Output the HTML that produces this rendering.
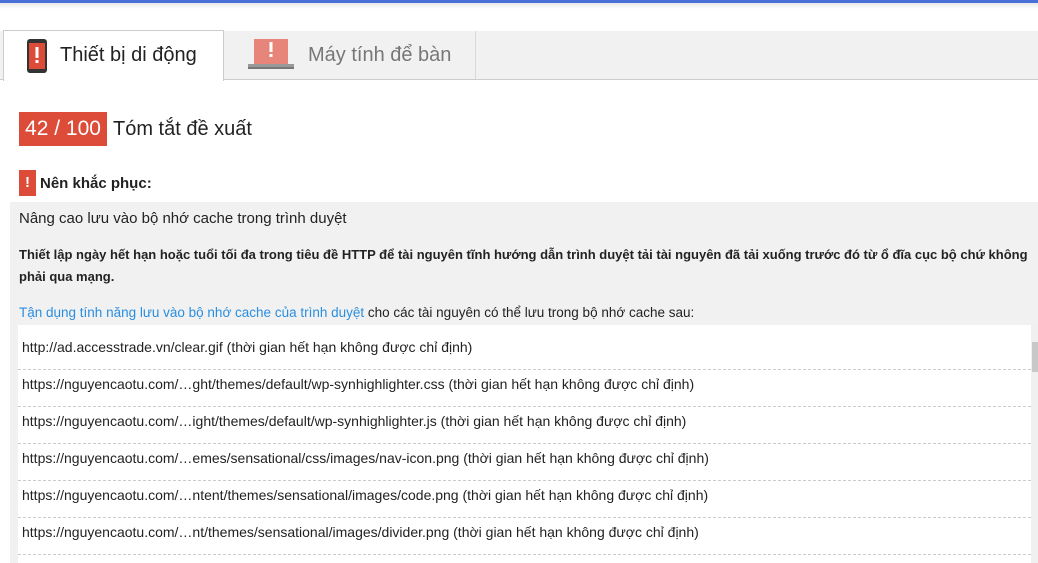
<!DOCTYPE html>
<html><head><meta charset="utf-8"><style>
*{margin:0;padding:0;box-sizing:border-box}
html,body{width:1038px;height:563px;overflow:hidden}
body{background:#fff;font-family:"Liberation Sans",Arial,sans-serif;position:relative;color:#222}
.top{position:absolute;left:0;top:0;width:1038px;height:3px;background:#4a6fd8}
.topsh{position:absolute;left:0;top:3px;width:1038px;height:6px;background:linear-gradient(#e8e8e8,#fff)}
.bar{position:absolute;left:0;top:31px;width:1038px;height:49px;background:#f1f1f1;border-bottom:1px solid #ccc}
.tab1{position:absolute;left:3px;top:30px;width:221px;height:51px;background:#fff;border:1px solid #ccc;border-bottom:none}
.tab2{position:absolute;left:475px;top:31px;width:1px;height:48px;background:#d8d8d8}
.t{position:absolute;font-size:20px}
.score{position:absolute;left:19px;top:112px;width:88px;height:34px;background:#dd4b39;color:#fff;font-size:21px;line-height:34px;text-align:center}
.panel{position:absolute;left:10px;top:202px;width:1028px;height:361px;background:#f1f1f1}
.list{position:absolute;left:18px;top:325px;width:1013px;height:238px;background:#fff}
.row{position:absolute;left:22px;font-size:14px;color:#222;white-space:nowrap}
.sep{position:absolute;left:18px;width:1013px;border-top:1px dashed #ccc}
.sb{position:absolute;left:1031px;top:325px;width:7px;height:238px;background:#f0f0f0}
</style></head><body>
<div class="top"></div><div class="topsh"></div>
<div class="bar"></div><div class="tab1"></div><div class="tab2"></div>
<svg style="position:absolute;left:27px;top:39px" width="20" height="34"><rect x="0" y="0" width="20" height="34" rx="3" fill="#333"/><rect x="2" y="4" width="16" height="26" fill="#dd4b39"/><rect x="8.5" y="8" width="3" height="11" fill="#fff"/><rect x="8.5" y="21" width="3" height="3" fill="#fff"/></svg>
<div class="t" style="left:60px;top:44px;color:#222">Thiết bị di động</div>
<svg style="position:absolute;left:248px;top:39px" width="46" height="31"><rect x="6" y="0" width="34" height="25" fill="#e8857a"/><rect x="21.5" y="3" width="3" height="10" fill="#fff"/><rect x="21.5" y="15" width="3" height="3" fill="#fff"/><rect x="0" y="25" width="46" height="3" fill="#999"/><rect x="0" y="28" width="46" height="2" fill="#777"/></svg>
<div class="t" style="left:308px;top:44px;color:#777">Máy tính để bàn</div>
<div class="score">42 / 100</div>
<div class="t" style="left:113px;top:118px">Tóm tắt đề xuất</div>
<div style="position:absolute;left:19px;top:170px;width:17px;height:26px;background:#dd4b39;color:#fff;font-weight:bold;font-size:15px;text-align:center;line-height:26px">!</div>
<div style="position:absolute;left:40px;top:175px;font-weight:bold;font-size:15px">Nên khắc phục:</div>
<div class="panel"></div>
<div style="position:absolute;left:19px;top:210px;font-size:15px;color:#222">Nâng cao lưu vào bộ nhớ cache trong trình duyệt</div>
<div style="position:absolute;left:19px;top:244px;width:1015px;font-size:13px;font-weight:bold;line-height:22px">Thiết lập ngày hết hạn hoặc tuổi tối đa trong tiêu đề HTTP để tài nguyên tĩnh hướng dẫn trình duyệt tải tài nguyên đã tải xuống trước đó từ ổ đĩa cục bộ chứ không phải qua mạng.</div>
<div style="position:absolute;left:19px;top:305px;font-size:13.5px"><span style="color:#2a8ee0">Tận dụng tính năng lưu vào bộ nhớ cache của trình duyệt</span> cho các tài nguyên có thể lưu trong bộ nhớ cache sau:</div>
<div class="list"></div><div class="sb"><div style="position:absolute;left:1px;top:17px;width:6px;height:30px;background:#c8c8c8"></div></div>
<div class="row" style="top:339px">http://ad.accesstrade.vn/clear.gif (thời gian hết hạn không được chỉ định)</div>
<div class="sep" style="top:369px"></div>
<div class="row" style="top:376px">https://nguyencaotu.com/…ght/themes/default/wp-synhighlighter.css (thời gian hết hạn không được chỉ định)</div>
<div class="sep" style="top:406px"></div>
<div class="row" style="top:413px">https://nguyencaotu.com/…ight/themes/default/wp-synhighlighter.js (thời gian hết hạn không được chỉ định)</div>
<div class="sep" style="top:443px"></div>
<div class="row" style="top:450px">https://nguyencaotu.com/…emes/sensational/css/images/nav-icon.png (thời gian hết hạn không được chỉ định)</div>
<div class="sep" style="top:480px"></div>
<div class="row" style="top:487px">https://nguyencaotu.com/…ntent/themes/sensational/images/code.png (thời gian hết hạn không được chỉ định)</div>
<div class="sep" style="top:517px"></div>
<div class="row" style="top:524px">https://nguyencaotu.com/…nt/themes/sensational/images/divider.png (thời gian hết hạn không được chỉ định)</div>
<div class="sep" style="top:554px"></div>
</body></html>
